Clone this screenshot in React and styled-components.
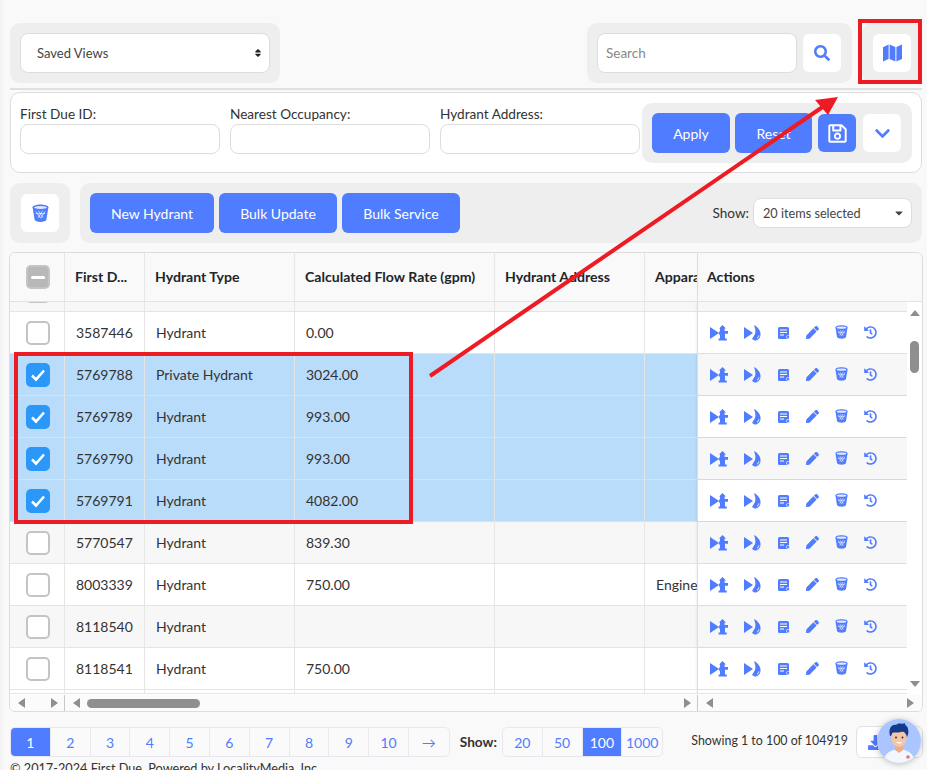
import React from 'react'
import styled, { createGlobalStyle } from 'styled-components'
import {
  FaChevronDown,
  FaCaretDown,
  FaDownload,
  FaHistory,
  FaPen,
  FaRegSave,
  FaSearch,
  FaSort,
} from 'react-icons/fa'

const rows = [
  { id: '3587446', type: 'Hydrant', flow: '0.00' },
  { id: '5769788', type: 'Private Hydrant', flow: '3024.00', selected: true },
  { id: '5769789', type: 'Hydrant', flow: '993.00', selected: true },
  { id: '5769790', type: 'Hydrant', flow: '993.00', selected: true },
  { id: '5769791', type: 'Hydrant', flow: '4082.00', selected: true },
  { id: '5770547', type: 'Hydrant', flow: '839.30' },
  { id: '8003339', type: 'Hydrant', flow: '750.00', apparatus: 'Engine 1' },
  { id: '8118540', type: 'Hydrant', flow: '' },
  { id: '8118541', type: 'Hydrant', flow: '750.00' },
]

const BLUE = '#507cff'

function BinIcon({ size = 14 }) {
  return (
    <svg width={size} height={size * 1.08} viewBox="0 0 20 22">
      <path d="M0.5 4 C0.5 -0.6 19.5 -0.6 19.5 4 L17 19 C16 22.4 4 22.4 3 19 Z" fill={BLUE} />
      <ellipse cx="10" cy="4.2" rx="7.6" ry="1.7" fill="#e3e9ff" />
      <path d="M4.5 9 L10 17 L15.5 9 M7.5 8 L13 16.5 M12.5 8 L7 16.5 M4.5 11.5 H15.5" stroke="#fff" strokeWidth="1.1" fill="none" opacity=".75" />
    </svg>
  )
}

function MapIcon() {
  return (
    <svg width="19" height="18" viewBox="0 0 19 18">
      <path d="M0 3.2 L5.6 0.6 V15 L0 17.6 Z" fill={BLUE} />
      <path d="M6.6 0.6 L12.4 3 V17.6 L6.6 15 Z" fill={BLUE} />
      <path d="M13.4 3 L19 0.4 V15 L13.4 17.6 Z" fill={BLUE} />
    </svg>
  )
}

function HydrantIcon() {
  return (
    <svg width="18" height="16" viewBox="0 0 18 16">
      <path d="M0 2 L9 8 L0 14 Z" fill={BLUE} />
      <path d="M12.5 0 L16 3.6 H14.6 V6 H18 V8.8 H15 V13.4 H16.8 V15.6 H8.6 V13.4 H10 V10.6 L8.6 8 L10 5.8 V3.6 H9 Z" fill={BLUE} />
    </svg>
  )
}

function FlameIcon() {
  return (
    <svg width="18" height="16" viewBox="0 0 18 16">
      <path d="M0 2 L9 8 L0 14 Z" fill={BLUE} />
      <path d="M10 0 C14 2 17 6 16.5 10 C16.3 13 14 15.6 10.5 15.6 L8 14 L11 9 C12 6 11 3 10 0 Z" fill={BLUE} />
      <path d="M13 13.2 C14.4 12.6 14.8 11.4 14.8 10.4" stroke="#fff" strokeWidth="1" fill="none" />
    </svg>
  )
}

function ListIcon() {
  return (
    <svg width="12" height="12" viewBox="0 0 12 12">
      <rect width="11" height="12" rx="1.5" fill={BLUE} />
      <path d="M2 3h7M2 5.5h7M2 8h4" stroke="#fff" strokeWidth="1" />
      <circle cx="10" cy="10" r="1.6" fill={BLUE} stroke="#fff" strokeWidth=".6" />
    </svg>
  )
}

function DoctorAvatar() {
  return (
    <svg width="44" height="44" viewBox="0 0 44 44">
      <clipPath id="avatarClip">
        <circle cx="22" cy="22" r="22" />
      </clipPath>
      <g clipPath="url(#avatarClip)">
        <rect width="44" height="44" fill="#aac5ff" />
        <path d="M6 44 C7 34 13 31 22 30 C31 31 37 34 38 44 Z" fill="#f3f6fc" />
        <path d="M18 25 h8 v6 l-4 3 -4 -3 Z" fill="#e9b08e" />
        <ellipse cx="22" cy="19" rx="7.5" ry="9" fill="#f6c6a4" />
        <path d="M13 17 C11 9 15 5 19 6 C22 3 25 6 28 4 C27 6 31 7 31 10 C32 13 31 16 30 18 C29 14 27 12 24 13 C21 14 17 13 15 14 C15 16 14 17 13 17 Z" fill="#143a8c" />
        <circle cx="19" cy="18.5" r=".9" fill="#223" />
        <circle cx="25.5" cy="18.5" r=".9" fill="#223" />
        <path d="M19.5 23 H25 C24.5 25 20 25 19.5 23 Z" fill="#fff" />
        <circle cx="31" cy="38" r="1.8" fill="#d77" />
      </g>
    </svg>
  )
}

function App() {
  return (
    <Page>
      <GlobalStyle />
      <TopBar>
        <Group>
          <SelectBox $width="250px" $height="40px" $padding="16px" $size="13px">
            Saved Views
            <FaSort size={10} color="#222" />
          </SelectBox>
        </Group>
        <TopRight>
          <Group>
            <SearchInput placeholder="Search" />
            <IconButton><FaSearch size={16} color={BLUE} /></IconButton>
          </Group>
          <Group>
            <IconButton><MapIcon /></IconButton>
          </Group>
        </TopRight>
      </TopBar>
      <Divider />
      <FilterCard>
        <Fields>
          <Field><label>First Due ID:</label><FieldInput /></Field>
          <Field><label>Nearest Occupancy:</label><FieldInput /></Field>
          <Field><label>Hydrant Address:</label><FieldInput /></Field>
        </Fields>
        <Group>
          <PrimaryButton $width="78px">Apply</PrimaryButton>
          <PrimaryButton $width="77px">Reset</PrimaryButton>
          <IconButton $primary><FaRegSave size={21} color="#fff" /></IconButton>
          <IconButton><FaChevronDown size={17} color={BLUE} /></IconButton>
        </Group>
      </FilterCard>
      <ActionBar>
        <Group>
          <IconButton><BinIcon size={17} /></IconButton>
        </Group>
        <ButtonGroup>
          <PrimaryButton $width="124px">New Hydrant</PrimaryButton>
          <PrimaryButton $width="118px">Bulk Update</PrimaryButton>
          <PrimaryButton $width="118px">Bulk Service</PrimaryButton>
          <ShowLabel>Show:</ShowLabel>
          <SelectBox $width="159px" $height="30px" $padding="9px" $size="12.7px">
            20 items selected
            <FaCaretDown size={12} color="#444" />
          </SelectBox>
        </ButtonGroup>
      </ActionBar>
      <Table>
        <HeaderRow>
          <HeadCell><CheckBox $mixed><Minus /></CheckBox></HeadCell>
          <HeadCell>First D...</HeadCell>
          <HeadCell>Hydrant Type</HeadCell>
          <HeadCell>Calculated Flow Rate (gpm)</HeadCell>
          <HeadCell>Hydrant Address</HeadCell>
          <HeadCell>Apparatus</HeadCell>
          <ActionsHead>Actions</ActionsHead>
        </HeaderRow>
        <TableBody>
          <RowsColumn>
            <PartialRow $height="10px" $striped>
              <Cell><CheckStub /></Cell><Cell /><Cell /><Cell /><Cell /><Cell /><ActionCell $striped />
            </PartialRow>
            {rows.map((row, i) => (
              <Row key={row.id} $selected={row.selected} $striped={i % 2 === 1}>
                <Cell>
                  <CheckBox $checked={row.selected}>
                    {row.selected && (
                      <svg width="16" height="14" viewBox="0 0 16 14">
                        <path d="M2 7.5 L6 11.5 L14 2.5" stroke="#fff" strokeWidth="2.6" fill="none" />
                      </svg>
                    )}
                  </CheckBox>
                </Cell>
                <Cell>{row.id}</Cell>
                <Cell>{row.type}</Cell>
                <Cell>{row.flow}</Cell>
                <Cell />
                <Cell>{row.apparatus}</Cell>
                <ActionCell $striped={i % 2 === 1}>
                  <HydrantIcon />
                  <FlameIcon />
                  <ListIcon />
                  <FaPen size={13} color={BLUE} />
                  <BinIcon size={13} />
                  <FaHistory size={13} color={BLUE} />
                </ActionCell>
              </Row>
            ))}
            <PartialRow $height="4px">
              <Cell /><Cell /><Cell /><Cell /><Cell /><Cell /><ActionCell />
            </PartialRow>
          </RowsColumn>
          <VerticalScroll>
            <Arrow $dir="up" />
            <VerticalThumb />
            <Arrow $dir="down" />
          </VerticalScroll>
        </TableBody>
        <ScrollRow>
          <LeftPane>
            <Arrow $dir="left" />
            <Arrow $dir="right" />
          </LeftPane>
          <CenterPane>
            <Arrow $dir="left" />
            <HorizontalThumb />
            <Arrow $dir="right" />
          </CenterPane>
          <RightPane>
            <Arrow $dir="left" />
            <Arrow $dir="right" />
          </RightPane>
        </ScrollRow>
      </Table>
      <PagerRow>
        <Pager>
          {['1', '2', '3', '4', '5', '6', '7', '8', '9', '10', '→'].map((p) => (
            <PageCell key={p} $active={p === '1'}>{p}</PageCell>
          ))}
        </Pager>
        <PagerShow>Show:</PagerShow>
        <Pager>
          {['20', '50', '100', '1000'].map((p) => (
            <PageCell key={p} $active={p === '100'}>{p}</PageCell>
          ))}
        </Pager>
        <Showing>Showing 1 to 100 of 104919</Showing>
        <DownloadButton><FaDownload size={15} color={BLUE} /></DownloadButton>
      </PagerRow>
      <Copyright>© 2017-2024 First Due. Powered by LocalityMedia, Inc.</Copyright>

      <Avatar><DoctorAvatar /></Avatar>
      <MapMark />
      <RowsMark />
      <ArrowMark width="927" height="770" viewBox="0 0 927 770">
        <path d="M430 376 L824 106" stroke="#ed1c24" strokeWidth="4" />
        <path d="M838 97 L815 100 L828 115 Z" fill="#ed1c24" />
      </ArrowMark>
    </Page>
  )
}
export default App

const GlobalStyle = createGlobalStyle`
  html, body {
    margin: 0;
    background: #f9f9f9;
  }
  * {
    box-sizing: border-box;
  }
`
const Page = styled.div`
  position: relative;
  width: 927px;
  height: 770px;
  overflow: hidden;
  padding: 23px 5px 0 7px;
  border-left: 3px solid #f4f4f4;
  font-family: Lato, "Open Sans", sans-serif;
  font-size: 14px;
  color: #333;
  background: #f9f9f9;
`
const TopBar = styled.div`
  display: flex;
  justify-content: space-between;
`
const TopRight = styled.div`
  display: flex;
  gap: 10px;
`
const Group = styled.div`
  display: flex;
  align-items: center;
  gap: 5px;
  height: 60px;
  padding: 0 10px;
  background: #eee;
  border-radius: 10px;
  flex-shrink: 0;
`
const SelectBox = styled.div`
  display: flex;
  align-items: center;
  justify-content: space-between;
  width: ${(p) => p.$width};
  height: ${(p) => p.$height};
  padding: 0 6px 1px ${(p) => p.$padding};
  font-size: ${(p) => p.$size};
  background: #fff;
  border: 1px solid #ddd;
  border-radius: 8px;
  color: #444;
`
const SearchInput = styled.input`
  width: 200px;
  height: 40px;
  padding: 0 8px 1px;
  font: inherit;
  font-size: 13.5px;
  background: #fff;
  border: 1px solid #ddd;
  border-radius: 8px;
  &::placeholder {
    color: #888;
  }
`
const IconButton = styled.div`
  display: flex;
  align-items: center;
  justify-content: center;
  width: 38px;
  height: 38px;
  margin: 0 1px;
  background: ${(p) => (p.$primary ? BLUE : '#fff')};
  border-radius: 6px;
`
const Divider = styled.div`
  height: 2px;
  margin-top: 5px;
  background: #e0e0e0;
`
const FilterCard = styled.div`
  display: flex;
  justify-content: space-between;
  height: 81px;
  margin-top: 2px;
  padding: 10px 9px;
  background: #fff;
  border: 1px solid #ddd;
  border-radius: 10px;
`
const Fields = styled.div`
  display: flex;
  gap: 10px;
`
const Field = styled.div`
  display: flex;
  flex-direction: column;
  width: 200px;
  padding-top: 1px;
  label {
    height: 20px;
    line-height: 20px;
    font-size: 13.6px;
  }
`
const FieldInput = styled.input`
  height: 30px;
  background: #fff;
  border: 1px solid #ddd;
  border-radius: 8px;
`
const PrimaryButton = styled.div`
  display: flex;
  align-items: center;
  justify-content: center;
  width: ${(p) => p.$width};
  height: 40px;
  color: #fff;
  font-size: 14px;
  background: ${BLUE};
  border-radius: 6px;
`
const ActionBar = styled.div`
  display: flex;
  gap: 10px;
  margin-top: 10px;
`
const ButtonGroup = styled(Group)`
  flex: 1;
`
const ShowLabel = styled.span`
  margin-left: auto;
  margin-right: -1px;
  font-size: 13.6px;
  color: #333;
`
const Table = styled.div`
  display: flex;
  flex-direction: column;
  height: 460px;
  margin: 9px -1px 0 -1px;
  background: #fff;
  border: 1px solid #ddd;
  border-radius: 6px;
  overflow: hidden;
`
const columns = '55px 80px 150px 200px 150px 52px 1fr'
const HeaderRow = styled.div`
  display: grid;
  grid-template-columns: ${columns};
  height: 49px;
  flex-shrink: 0;
  background: #f9f9f9;
  border-bottom: 1px solid #e2e2e2;
`
const HeadCell = styled.div`
  display: flex;
  align-items: center;
  padding: 0 0 2px 10px;
  font-weight: 700;
  font-size: 14.1px;
  color: #212529;
  white-space: nowrap;
  overflow: hidden;
  border-right: 1px solid #e6e6e6;
  &:first-child {
    padding: 0 0 0 16px;
  }
  &:nth-child(6) {
    border-right: none;
  }
`
const ActionsHead = styled(HeadCell)`
  padding-left: 9px;
  border-left: 1px solid #ddd;
  border-right: none;
`
const TableBody = styled.div`
  display: flex;
  flex: 1;
  min-height: 0;
`
const RowsColumn = styled.div`
  flex: 1;
  min-width: 0;
`
const Row = styled.div`
  display: grid;
  grid-template-columns: 55px 80px 150px 200px 150px 52px 210px;
  height: 42px;
  background: ${(p) => (p.$selected ? '#b9dcfa' : p.$striped ? '#f7f7f8' : '#fff')};
  border-bottom: 1px solid ${(p) => (p.$selected ? '#cbe5fb' : '#e4e4ea')};
`
const PartialRow = styled(Row)`
  height: ${(p) => p.$height};
  overflow: hidden;
`
const Cell = styled.div`
  display: flex;
  align-items: center;
  padding-left: 11px;
  color: #333;
  white-space: nowrap;
  overflow: hidden;
  border-right: 1px solid #e6e6e6;
  &:first-child {
    padding-left: 16px;
  }
  &:nth-child(6) {
    border-right: none;
  }
`
const ActionCell = styled.div`
  display: flex;
  align-items: center;
  gap: 16px;
  padding-left: 12px;
  background: ${(p) => (p.$striped ? '#f7f7f8' : '#fff')};
  border-left: 1px solid #ddd;
  box-shadow: -1px 0 2px rgba(0, 0, 0, 0.06);
`
const CheckBox = styled.div`
  display: flex;
  align-items: center;
  justify-content: center;
  width: 24px;
  height: 24px;
  background: ${(p) => (p.$checked ? '#2b97f8' : p.$mixed ? '#b8b8b8' : '#fff')};
  border: ${(p) => (p.$checked ? 'none' : '2px solid #c4c4c4')};
  border-radius: 5px;
`
const Minus = styled.div`
  width: 14px;
  height: 3px;
  background: #fff;
  border-radius: 2px;
`
const CheckStub = styled.div`
  width: 24px;
  height: 12px;
  margin-top: -20px;
  border: 2px solid #c4c4c4;
  border-radius: 5px;
`
const VerticalScroll = styled.div`
  display: flex;
  flex-direction: column;
  align-items: center;
  width: 15px;
  padding: 8px 0 8px;
  background: #fff;
`
const VerticalThumb = styled.div`
  width: 9px;
  height: 32px;
  margin-top: 25px;
  margin-bottom: auto;
  background: #8f8f8f;
  border-radius: 5px;
`
const Arrow = styled.div`
  width: 0;
  height: 0;
  flex-shrink: 0;
  border-style: solid;
  border-color: transparent;
  ${(p) => p.$dir === 'up' && 'border-width: 0 5px 6px; border-bottom-color: #8f8f8f;'}
  ${(p) => p.$dir === 'down' && 'border-width: 6px 5px 0; border-top-color: #8f8f8f;'}
  ${(p) => p.$dir === 'left' && 'border-width: 5px 7px 5px 0; border-right-color: #8f8f8f;'}
  ${(p) => p.$dir === 'right' && 'border-width: 5px 0 5px 7px; border-left-color: #8f8f8f;'}
`
const ScrollRow = styled.div`
  display: flex;
  height: 16px;
  flex-shrink: 0;
  background: #fbfbfb;
`
const LeftPane = styled.div`
  display: flex;
  align-items: center;
  justify-content: space-between;
  width: 55px;
  padding: 0 6px 0 8px;
  border-right: 1px solid #c8c8c8;
`
const CenterPane = styled.div`
  display: flex;
  align-items: center;
  width: 633px;
  padding: 0 6px 0 8px;
  border-right: 1px solid #c8c8c8;
`
const HorizontalThumb = styled.div`
  width: 113px;
  height: 9px;
  margin-left: 7px;
  margin-right: auto;
  background: #8f8f8f;
  border-radius: 5px;
`
const RightPane = styled.div`
  display: flex;
  align-items: center;
  justify-content: space-between;
  flex: 1;
  padding: 0 8px;
`
const PagerRow = styled.div`
  display: flex;
  align-items: center;
  height: 30px;
  margin-top: 15px;
`
const Pager = styled.div`
  display: flex;
  background: #fafafa;
  border: 1px solid #e8e8f0;
  border-radius: 5px;
  overflow: hidden;
`
const PageCell = styled.div`
  display: flex;
  align-items: center;
  justify-content: center;
  width: 39.8px;
  height: 28px;
  color: ${(p) => (p.$active ? '#fff' : BLUE)};
  background: ${(p) => (p.$active ? BLUE : 'transparent')};
  border-right: 1px solid #e8e8f0;
  &:last-child {
    border-right: none;
  }
`
const PagerShow = styled.span`
  margin: 0 5px 0 10px;
  font-weight: 700;
  font-size: 13.6px;
  color: #333;
`
const Showing = styled.span`
  margin-left: auto;
  padding-bottom: 3px;
  font-size: 12.4px;
`
const DownloadButton = styled.div`
  display: flex;
  align-items: center;
  justify-content: flex-start;
  width: 67px;
  height: 32px;
  margin: 0 -1px 0 8px;
  padding-left: 11px;
  background: #fff;
  border: 1px solid #e2e2e2;
  border-radius: 6px;
`
const Copyright = styled.div`
  margin-top: 1px;
  font-size: 12.7px;
  line-height: 20px;
  color: #333;
`
const Avatar = styled.div`
  position: absolute;
  left: 874px;
  top: 719px;
  width: 44px;
  height: 44px;
  border-radius: 50%;
  box-shadow: 0 1px 6px rgba(0, 0, 0, 0.25);
`
const MapMark = styled.div`
  position: absolute;
  left: 855px;
  top: 19px;
  width: 64px;
  height: 65px;
  border: 4px solid #ed1c24;
`
const RowsMark = styled.div`
  position: absolute;
  left: 11px;
  top: 352px;
  width: 399px;
  height: 172px;
  border: 4px solid #ed1c24;
`
const ArrowMark = styled.svg`
  position: absolute;
  left: -3px;
  top: 0;
  pointer-events: none;
`
